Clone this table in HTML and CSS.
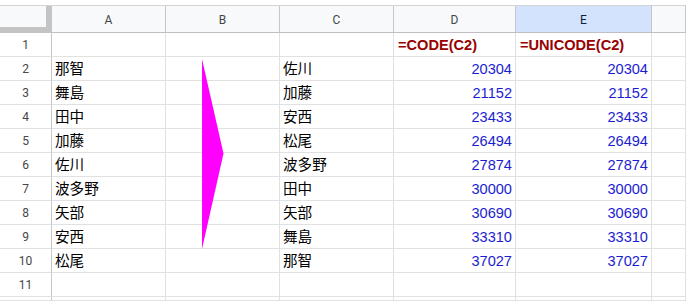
FILE: index.html
```html
<!DOCTYPE html>
<html lang="ja">
<head>
<meta charset="utf-8">
<title>Sheet</title>
<link rel="stylesheet" href="styles.css">
</head>
<body>
<div class="sheet">
  <div class="grid">
    <div class="corner"></div>
    <div class="ch">A</div>
    <div class="ch">B</div>
    <div class="ch">C</div>
    <div class="ch">D</div>
    <div class="ch sel">E</div>
    <div class="ch"></div>

    <div class="rh">1</div><div class="c"></div><div class="c"></div><div class="c"></div><div class="c f">=CODE(C2)</div><div class="c f">=UNICODE(C2)</div><div class="c"></div>
    <div class="rh">2</div><div class="c">那智</div><div class="c"></div><div class="c">佐川</div><div class="c n">20304</div><div class="c n">20304</div><div class="c"></div>
    <div class="rh">3</div><div class="c">舞島</div><div class="c"></div><div class="c">加藤</div><div class="c n">21152</div><div class="c n">21152</div><div class="c"></div>
    <div class="rh">4</div><div class="c">田中</div><div class="c"></div><div class="c">安西</div><div class="c n">23433</div><div class="c n">23433</div><div class="c"></div>
    <div class="rh">5</div><div class="c">加藤</div><div class="c"></div><div class="c">松尾</div><div class="c n">26494</div><div class="c n">26494</div><div class="c"></div>
    <div class="rh">6</div><div class="c">佐川</div><div class="c"></div><div class="c">波多野</div><div class="c n">27874</div><div class="c n">27874</div><div class="c"></div>
    <div class="rh">7</div><div class="c">波多野</div><div class="c"></div><div class="c">田中</div><div class="c n">30000</div><div class="c n">30000</div><div class="c"></div>
    <div class="rh">8</div><div class="c">矢部</div><div class="c"></div><div class="c">矢部</div><div class="c n">30690</div><div class="c n">30690</div><div class="c"></div>
    <div class="rh">9</div><div class="c">安西</div><div class="c"></div><div class="c">舞島</div><div class="c n">33310</div><div class="c n">33310</div><div class="c"></div>
    <div class="rh">10</div><div class="c">松尾</div><div class="c"></div><div class="c">那智</div><div class="c n">37027</div><div class="c n">37027</div><div class="c"></div>
    <div class="rh">11</div><div class="c"></div><div class="c"></div><div class="c"></div><div class="c"></div><div class="c"></div><div class="c"></div>
    <div class="rh"></div><div class="c"></div><div class="c"></div><div class="c"></div><div class="c"></div><div class="c"></div><div class="c"></div>
  </div>
  <svg class="arrow" width="686" height="301" viewBox="0 0 686 301">
    <polygon points="202,59 223.5,153.5 202,249" fill="#ff00ff"/>
  </svg>
</div>
</body>
</html>
```
FILE: styles.css
```css
html, body {
  margin: 0;
  padding: 0;
  background: #ffffff;
  overflow: hidden;
}

.sheet {
  position: relative;
  width: 686px;
  height: 301px;
  padding-top: 5px;
  box-sizing: border-box;
  overflow: hidden;
}

.grid {
  display: grid;
  grid-template-columns: 52px 114px 114px 114px 122px 136px 34px;
  grid-template-rows: 27px repeat(11, 24px) 4px;
  border-top: 1px solid #d4d4d4;
  font-family: "Liberation Sans", Arial, "Noto Sans CJK JP", sans-serif;
}

.corner {
  background: #f8f9fa;
  box-sizing: border-box;
  border-right: 6px solid #c4c4c4;
  border-bottom: 6px solid #c4c4c4;
}

.ch {
  background: #f8f9fa;
  box-sizing: border-box;
  border-right: 1px solid #c7c7c7;
  border-bottom: 1px solid #c0c0c0;
  display: flex;
  align-items: center;
  justify-content: center;
  font-family: Roboto, "Liberation Sans", Arial, sans-serif;
  font-size: 12px;
  color: #444746;
  padding-top: 2px;
}

.ch.sel {
  background: #d3e3fd;
  color: #0b1f3f;
}

.rh {
  background: #ffffff;
  box-sizing: border-box;
  border-right: 1px solid #c7c7c7;
  border-bottom: 1px solid #e1e1e1;
  display: flex;
  align-items: center;
  justify-content: center;
  font-family: Roboto, "Liberation Sans", Arial, sans-serif;
  font-size: 12px;
  color: #444746;
  padding-top: 1px;
  overflow: hidden;
}

.c {
  box-sizing: border-box;
  border-right: 1px solid #e1e1e1;
  border-bottom: 1px solid #e1e1e1;
  display: flex;
  align-items: flex-end;
  padding: 0 3px 2px 3px;
  font-size: 14.6px;
  line-height: 18px;
  color: #000000;
  white-space: nowrap;
  overflow: hidden;
  font-family: "Liberation Sans", Arial, "Noto Sans CJK JP", sans-serif;
}

.c.n {
  justify-content: flex-end;
  color: #1c1cd0;
  padding-right: 3px;
}

.c.f {
  color: #990000;
  font-weight: bold;
  padding-left: 4px;
}

.arrow {
  position: absolute;
  left: 0;
  top: 0;
  pointer-events: none;
}
```
